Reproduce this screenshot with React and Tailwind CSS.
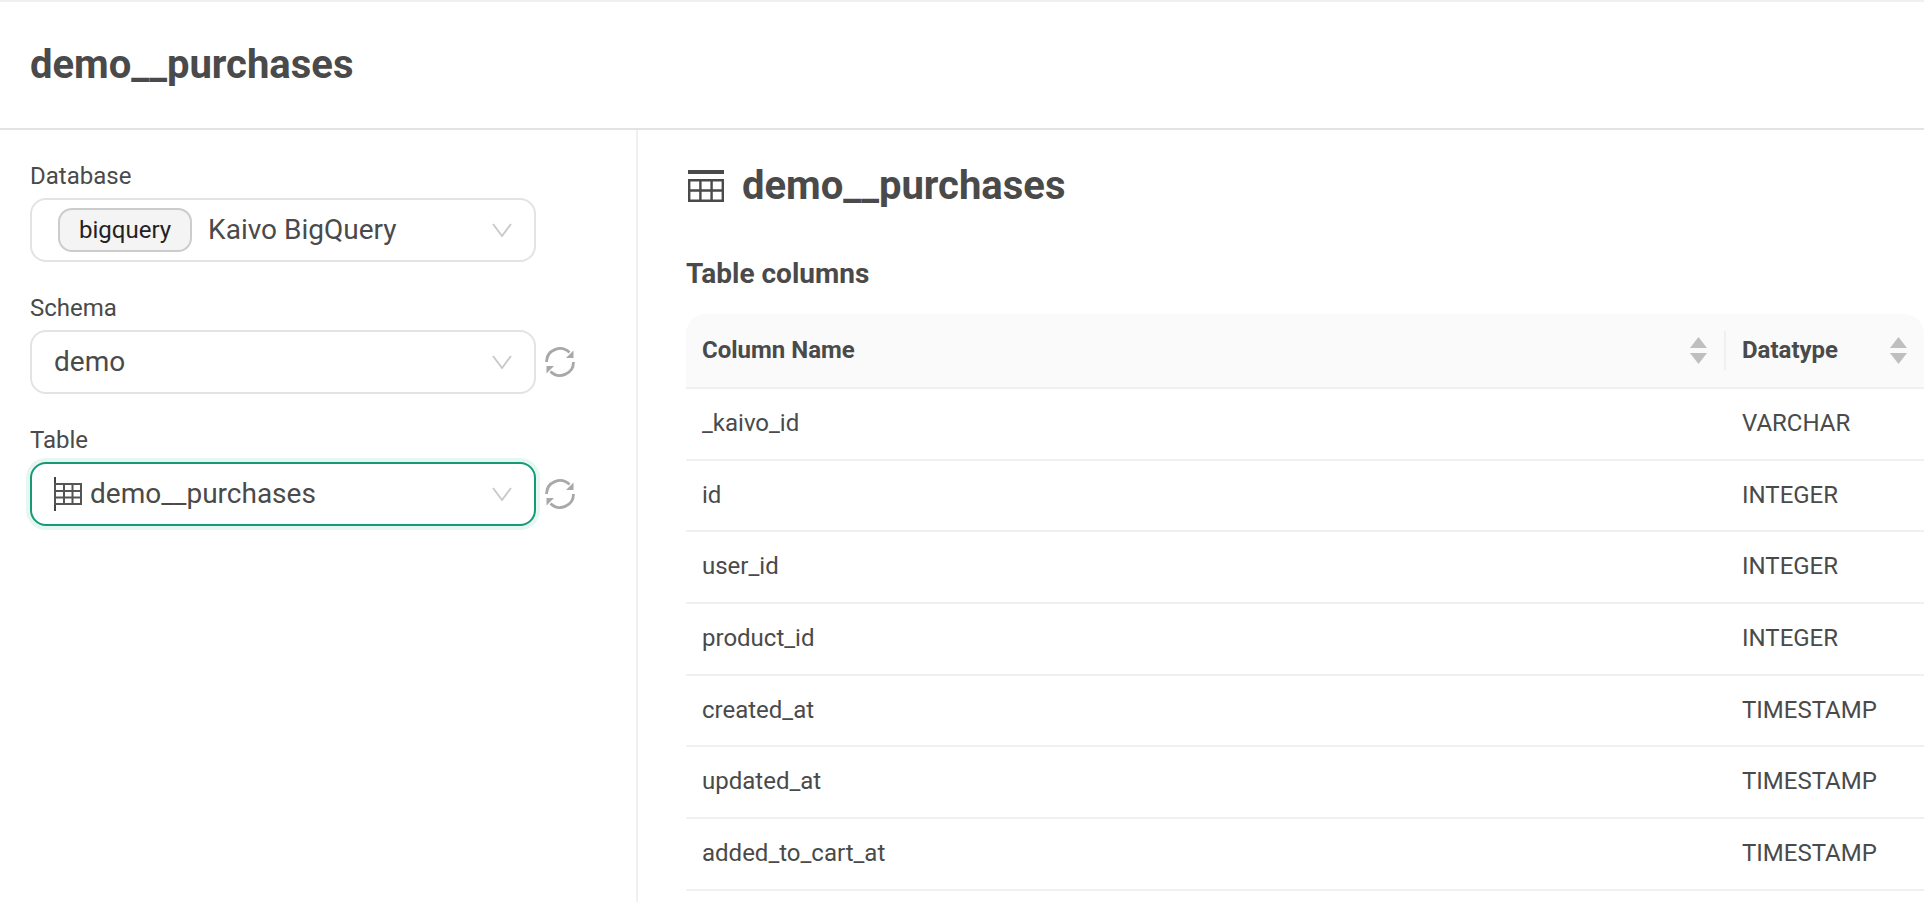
const ROWS = [
  ['_kaivo_id', 'VARCHAR'],
  ['id', 'INTEGER'],
  ['user_id', 'INTEGER'],
  ['product_id', 'INTEGER'],
  ['created_at', 'TIMESTAMP'],
  ['updated_at', 'TIMESTAMP'],
  ['added_to_cart_at', 'TIMESTAMP'],
]

function Chevron() {
  return (
    <svg width="20" height="14" viewBox="0 0 20 14" fill="none" className="absolute right-[22px] top-[23px]">
      <path d="M1 1l9 12 9-12" stroke="#c8c8c8" strokeWidth="1.8" />
    </svg>
  )
}

function Refresh() {
  return (
    <svg width="32" height="32" viewBox="0 0 32 32" fill="none" className="ml-[8px] shrink-0">
      <path d="M2.5 16a13.5 13.5 0 0 1 23-9.5" stroke="#a8a8a8" strokeWidth="2.8" />
      <path d="M29.5 16a13.5 13.5 0 0 1-23 9.5" stroke="#a8a8a8" strokeWidth="2.8" />
      <path d="M29.5 4.5v7.5h-7.5z" fill="#a8a8a8" />
      <path d="M2.5 27.5v-7.5h7.5z" fill="#a8a8a8" />
    </svg>
  )
}

function SmallTableIcon() {
  return (
    <svg width="28" height="34" viewBox="0 0 28 34" fill="none" className="mr-[8px] shrink-0">
      <path d="M1 0v34" stroke="#444" strokeWidth="2" />
      <path d="M1 7h26v20H1zM1 14h26M1 20.5h26M10 7v20M18.5 7v20" stroke="#555" strokeWidth="2" />
    </svg>
  )
}

function TableIcon() {
  return (
    <svg width="36" height="32" viewBox="0 0 36 32" className="shrink-0">
      <path d="M0 0h36v4H0z" fill="#4a4a4a" />
      <path d="M1.2 10.2h33.6v20.6H1.2zM1.2 20.5h33.6M12.4 10.2v20.6M23.6 10.2v20.6" fill="none" stroke="#4a4a4a" strokeWidth="2.4" />
    </svg>
  )
}

function SortIcon() {
  return (
    <svg width="17" height="27" viewBox="0 0 17 27" className="shrink-0">
      <path d="M8.5 0L17 11H0z" fill="#bfbfbf" />
      <path d="M8.5 27L0 16h17z" fill="#bfbfbf" />
    </svg>
  )
}

function Field({ label, focused, refresh, children }) {
  return (
    <div className="mb-[22px]">
      <div className="h-[46px] pt-[9px] text-[24px] leading-[30px] text-[#4a4a4a]">{label}</div>
      <div className="flex items-center">
        <div
          className={`relative flex h-[64px] w-[506px] shrink-0 items-center rounded-[16px] border-2 bg-white pl-[22px] text-[28px] text-[#4a4a4a] ${
            focused ? 'border-[#149a78] shadow-[0_0_0_4px_#e6f7f2]' : 'border-[#e3e3e3]'
          }`}
        >
          {children}
          <Chevron />
        </div>
        {refresh && <Refresh />}
      </div>
    </div>
  )
}

export default function App() {
  return (
    <div className="flex h-screen flex-col overflow-hidden border-t-2 border-[#f0f0f0] bg-white font-['Roboto',sans-serif] text-[#4a4a4a]">
      <header className="flex h-[128px] shrink-0 items-center border-b-2 border-[#e3e3e3] pl-[30px]">
        <h1 className="text-[40px] font-bold leading-none">demo__purchases</h1>
      </header>
      <div className="flex min-h-0 flex-1">
        <aside className="w-[638px] shrink-0 border-r-2 border-[#f0f0f0] pl-[30px] pt-[22px]">
          <Field label="Database">
            <span className="mr-[16px] ml-[4px] flex h-[44px] items-center rounded-[14px] border-2 border-[#cccccc] bg-[#f4f4f4] px-[19px] text-[24px] text-[#222]">
              bigquery
            </span>
            Kaivo BigQuery
          </Field>
          <Field label="Schema" refresh>
            demo
          </Field>
          <Field label="Table" focused refresh>
            <SmallTableIcon />
            demo__purchases
          </Field>
        </aside>
        <main className="min-w-0 flex-1 pl-[48px]">
          <div className="flex h-[100px] items-center gap-[18px] pl-[2px] pt-[12px]">
            <TableIcon />
            <h2 className="text-[40px] font-bold leading-none">demo__purchases</h2>
          </div>
          <h3 className="h-[84px] pt-[24px] text-[28px] font-bold leading-[40px]">Table columns</h3>
          <div className="grid grid-cols-[1038px_1fr]">
            <div className="flex h-[75px] items-center justify-between rounded-tl-[20px] border-b-2 border-[#f0f0f0] bg-[#fafafa] pb-[1px] pl-[16px] pr-[17px] text-[24px] font-bold">
              Column Name
              <SortIcon />
            </div>
            <div className="relative flex h-[75px] items-center justify-between rounded-tr-[20px] border-b-2 border-[#f0f0f0] bg-[#fafafa] pb-[1px] pl-[18px] pr-[17px] text-[24px] font-bold">
              <span className="absolute left-0 top-[17px] h-[39px] w-[2px] bg-[#f0f0f0]" />
              Datatype
              <SortIcon />
            </div>
            {ROWS.map(([name, type]) => (
              <div key={name} className="contents">
                <div className="flex h-[71.7px] items-center border-b-2 border-[#f0f0f0] pb-[2px] pl-[16px] text-[24px]">{name}</div>
                <div className="flex h-[71.7px] items-center border-b-2 border-[#f0f0f0] pb-[2px] pl-[18px] text-[24px]">{type}</div>
              </div>
            ))}
          </div>
        </main>
      </div>
    </div>
  )
}
